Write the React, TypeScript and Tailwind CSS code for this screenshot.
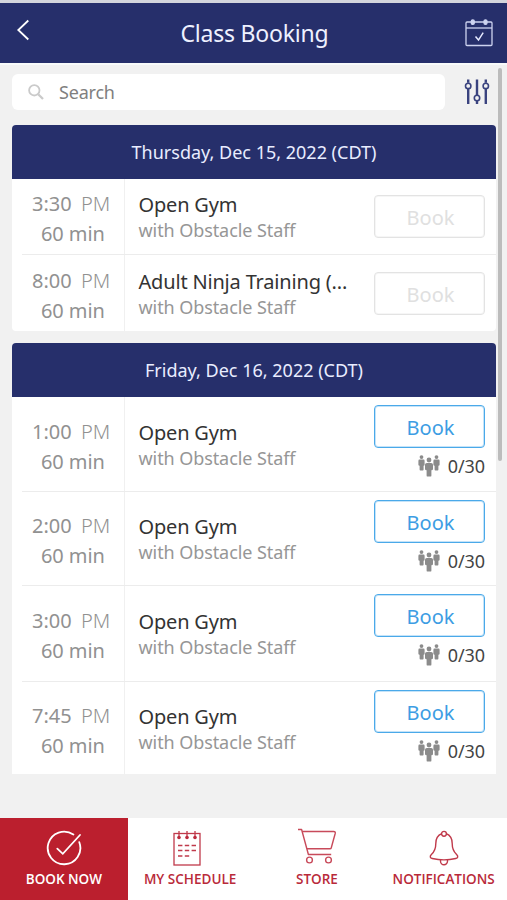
type ClassItem = {
  time: string;
  name: string;
  open: boolean;
  height: string;
  pad: string;
};

const days: { date: string; items: ClassItem[] }[] = [
  {
    date: "Thursday, Dec 15, 2022 (CDT)",
    items: [
      { time: "3:30", name: "Open Gym", open: false, height: "h-[76px]", pad: "pt-[10px]" },
      { time: "8:00", name: "Adult Ninja Training (...", open: false, height: "h-[76px]", pad: "pt-[11px]" },
    ],
  },
  {
    date: "Friday, Dec 16, 2022 (CDT)",
    items: [
      { time: "1:00", name: "Open Gym", open: true, height: "h-[95px]", pad: "pt-[20px]" },
      { time: "2:00", name: "Open Gym", open: true, height: "h-[94px]", pad: "pt-[19px]" },
      { time: "3:00", name: "Open Gym", open: true, height: "h-[96px]", pad: "pt-[20px]" },
      { time: "7:45", name: "Open Gym", open: true, height: "h-[92px]", pad: "pt-[19px]" },
    ],
  },
];

function CalendarIcon() {
  return (
    <svg width="28" height="28" viewBox="0 0 28 28" fill="none" stroke="#cdd3f0" strokeWidth="1.3">
      <rect x="1" y="3" width="26" height="23.5" rx="1" />
      <path d="M1 9h26" />
      <path d="m10.5 17.5 3 3.6 4.7-7.4" strokeWidth="1.5" stroke="#e6eaff" />
      <rect x="6.3" y=".8" width="3" height="4.6" rx="1.5" fill="#cdd3f0" />
      <rect x="19" y=".8" width="3" height="4.6" rx="1.5" fill="#cdd3f0" />
    </svg>
  );
}

function FilterIcon() {
  return (
    <svg width="26" height="26" viewBox="0 0 26 26" fill="none" stroke="#3a437f" strokeWidth="2.4">
      <path d="M4.2 .5v3.2M4.2 10v15M13 .5v15.6M13 22v3M21.8 .5v3.2M21.8 10v15" />
      <g strokeWidth="1.6">
        <circle cx="4.2" cy="6.9" r="2.7" />
        <circle cx="13" cy="19" r="2.7" />
        <circle cx="21.8" cy="6.9" r="2.7" />
      </g>
    </svg>
  );
}

function PeopleIcon() {
  return (
    <svg width="22" height="22" viewBox="0 0 22 22" fill="#8b8b8b">
      <circle cx="3.5" cy="2.1" r="1.9" />
      <path d="M1.4 4.6h4.200q1 0 1 1.400v3.800q0 1-1 1v3.700q0 .9-.8.9H2.400q-.8 0-.8-.9v-3.700Q.4 10.800.4 9.800V6q0-1.400 1-1.400z" />
      <circle cx="18.500" cy="2.100" r="1.900" />
      <path d="M16.400 4.600h4.200q1 0 1 1.400v3.800q0 1-1.200 1v3.700q0 .9-.8.9h-2.200q-.8 0-.8-.9v-3.700q-1.200 0-1.200-1V6q0-1.400 1-1.400z" />
      <circle cx="11" cy="5" r="2.400" />
      <path d="M8.900 8h4.200q1.900 0 1.900 1.800v4.200q0 1.200-1.600 1.200v5.200q0 1.200-1.100 1.200H9.700q-1.100 0-1.100-1.200v-5.200Q7 15.200 7 14V9.800Q7 8 8.900 8z" />
    </svg>
  );
}

function BookNowIcon() {
  return (
    <svg width="36" height="36" viewBox="0 0 36 36" fill="none" stroke="#fff" strokeWidth="1.8" strokeLinecap="round">
      <path d="M27.4 4.6A16.3 16.3 0 1 0 33.3 12.2" />
      <path d="m11.3 18.6 5.500 5.200L34 5" />
    </svg>
  );
}

function ScheduleIcon() {
  return (
    <svg width="28" height="35" viewBox="0 0 28 35" fill="none" stroke="#c03a4b" strokeWidth="1.3" className="mr-[7px]">
      <rect x="1" y="2.5" width="26" height="31.5" />
      <path d="M6 0v7M14 0v7M22 0v7" />
      <g fill="#bb2a3d" stroke="none">
        <circle cx="6" cy="6.5" r="1.8" />
        <circle cx="14" cy="6.5" r="1.8" />
        <circle cx="22" cy="6.5" r="1.8" />
      </g>
      <path d="M5 14.5h4.400M11.800 14.500h4.400M18.600 14.500h4.400M5 19.500h4.400M11.800 19.500h4.400M18.600 19.500h4.400M5 25h4.400M11.800 25h4.400" strokeWidth="1.5" />
    </svg>
  );
}

function StoreIcon() {
  return (
    <svg width="40" height="36" viewBox="0 0 40 36" fill="none" stroke="#c84a5a" strokeWidth="1.4" strokeLinejoin="round" className="-mt-[4px]">
      <path d="M1 1.5h3.600L11.400 26.500h22.800" />
      <path d="M5.200 3.500h31.500q2 0 1.500 2l-4 14.500q-.2.700-1.200.700H10" />
      <circle cx="12.5" cy="32" r="2.900" />
      <circle cx="31.500" cy="32" r="2.900" />
    </svg>
  );
}

function BellIcon() {
  return (
    <svg width="30" height="36" viewBox="0 0 30 36" fill="none" stroke="#c03a4b" strokeWidth="1.4">
      <circle cx="15" cy="3.8" r="2.4" />
      <path d="M12.7 3.7C8.3 5.5 6.8 9 6.8 13.5c0 6-1.500 8.200-4.200 10.800-2.300 2.300-1.400 3.700.7 4.200 6.500 1.500 16.900 1.500 23.400 0 2.100-.5 3-1.900.7-4.200-2.700-2.600-4.200-4.800-4.200-10.800 0-4.500-1.500-8-5.900-9.800" />
      <path d="M11.5 29.700v1.600a3.500 3.500 0 0 0 7 0v-1.600" />
    </svg>
  );
}

const tabs = [
  { label: "BOOK NOW", icon: <BookNowIcon />, active: true },
  { label: "MY SCHEDULE", icon: <ScheduleIcon />, active: false },
  { label: "STORE", icon: <StoreIcon />, active: false },
  { label: "NOTIFICATIONS", icon: <BellIcon />, active: false },
];

function ClassRow({ item, first, last }: { item: ClassItem; first: boolean; last: boolean }) {
  return (
    <div className={`flex pl-[10px] ${item.height}`}>
      <div className={`flex grow ${last ? "" : "border-b border-[#ececec]"}`}>
        <div
          className={`w-[103px] shrink-0 border-r border-[#f0f0f0] text-[20px] leading-[30px] text-[#919191] ${item.pad}`}
        >
          <div className="flex pl-[10px]">
            <span className="w-[49px]">{item.time}</span>
            <span className="font-light">PM</span>
          </div>
          <div className="pl-[19px] tracking-[-0.1px]">60 min</div>
        </div>
        <div className={`grow whitespace-nowrap pl-[13.5px] ${item.pad}`}>
          <div className="mt-[2px] text-[20px] leading-[28px] tracking-[-0.18px] text-[#333]">{item.name}</div>
          <div className="text-[18px] leading-[23px] tracking-[-0.08px] text-[#969696]">with Obstacle Staff</div>
        </div>
        <div
          className={`mr-[11px] flex w-[111px] shrink-0 flex-col ${
            item.open ? "pt-[8px]" : first ? "pt-[16px]" : "pt-[17px]"
          }`}
        >
          <button
            className={`h-[43px] w-full rounded-[4px] border pl-[2px] pt-[2px] text-[20px] leading-none ring-1 ring-inset ${
              item.open
                ? "border-[#4aa9e9] text-[#3d9de3] ring-[#c5e3f8]"
                : "border-[#e3e3e3] text-[#e0e0e0] ring-[#f6f6f6]"
            }`}
          >
            Book
          </button>
          {item.open && (
            <div className="mt-[6px] flex h-[24px] items-center justify-end gap-[8px] text-[18px] tracking-[-0.1px] text-[#444]">
              <PeopleIcon />
              <span>0/30</span>
            </div>
          )}
        </div>
      </div>
    </div>
  );
}

export default function App() {
  return (
    <div className="relative flex h-[900px] w-[507px] flex-col overflow-hidden bg-[#f1f1f1] font-['Noto_Sans',sans-serif]">
      <header className="flex h-[63px] shrink-0 items-center justify-between border-t-[3px] border-[#d3d5dc] bg-[#262f6b] pl-[16px] pr-[14px]">
        <svg width="28" height="24" viewBox="0 0 28 24" fill="none" stroke="#fff" strokeWidth="1.8" className="-mt-[7px]">
          <path d="M12.3 2.5 2.3 12l10 9.5" />
        </svg>
        <h1 className="text-[23px] tracking-[-0.2px] text-[#eef1ff]">Class Booking</h1>
        <CalendarIcon />
      </header>

      <main className="grow border-t-2 border-[#f8fafa] pl-[12px] pr-[11px]">
        <div className="flex h-[60px] items-start pt-[9px]">
          <label className="flex h-[36px] w-[433px] items-center rounded-[6px] bg-white pl-[16px]">
            <svg width="16" height="16" viewBox="0 0 16 16" fill="none" stroke="#cacaca" strokeWidth="1.8">
              <circle cx="6.3" cy="6.3" r="5.2" />
              <path d="m10.2 10.2 4.8 4.8" strokeWidth="2.3" />
            </svg>
            <span className="pl-[15px] text-[18px] tracking-[-0.2px] text-[#7f7f7f]">Search</span>
          </label>
          <div className="ml-[19px] mt-[5px]">
            <FilterIcon />
          </div>
        </div>

        <div className="flex flex-col gap-3">
          {days.map((day, d) => (
            <section
              key={day.date}
              className={`overflow-hidden bg-white ${d === days.length - 1 ? "rounded-t-[4px]" : "rounded-[4px]"}`}
            >
              <h2 className="flex h-[54px] items-center justify-center bg-[#262f6b] text-[18px] text-[#e9edff]">
                {day.date}
              </h2>
              {day.items.map((item, i) => (
                <ClassRow key={item.time} item={item} first={i === 0} last={i === day.items.length - 1} />
              ))}
            </section>
          ))}
        </div>
      </main>

      <div className="absolute right-[5px] top-[68px] h-[393px] w-[4px] rounded-full bg-[#bcbcbc]" />

      <nav className="grid h-[82px] shrink-0 grid-cols-4 bg-white font-['Open_Sans',sans-serif]">
        {tabs.map((tab) => (
          <div
            key={tab.label}
            className={`flex flex-col items-center whitespace-nowrap pt-[11px] text-[13.5px] font-semibold ${
              tab.active ? "-mr-px bg-[#bb1f2e] text-white" : "text-[#b92a3a]"
            }`}
          >
            <div className="flex h-[38px] items-center">{tab.icon}</div>
            <span className="mt-[3px] leading-[18px]">{tab.label}</span>
          </div>
        ))}
      </nav>
    </div>
  );
}
